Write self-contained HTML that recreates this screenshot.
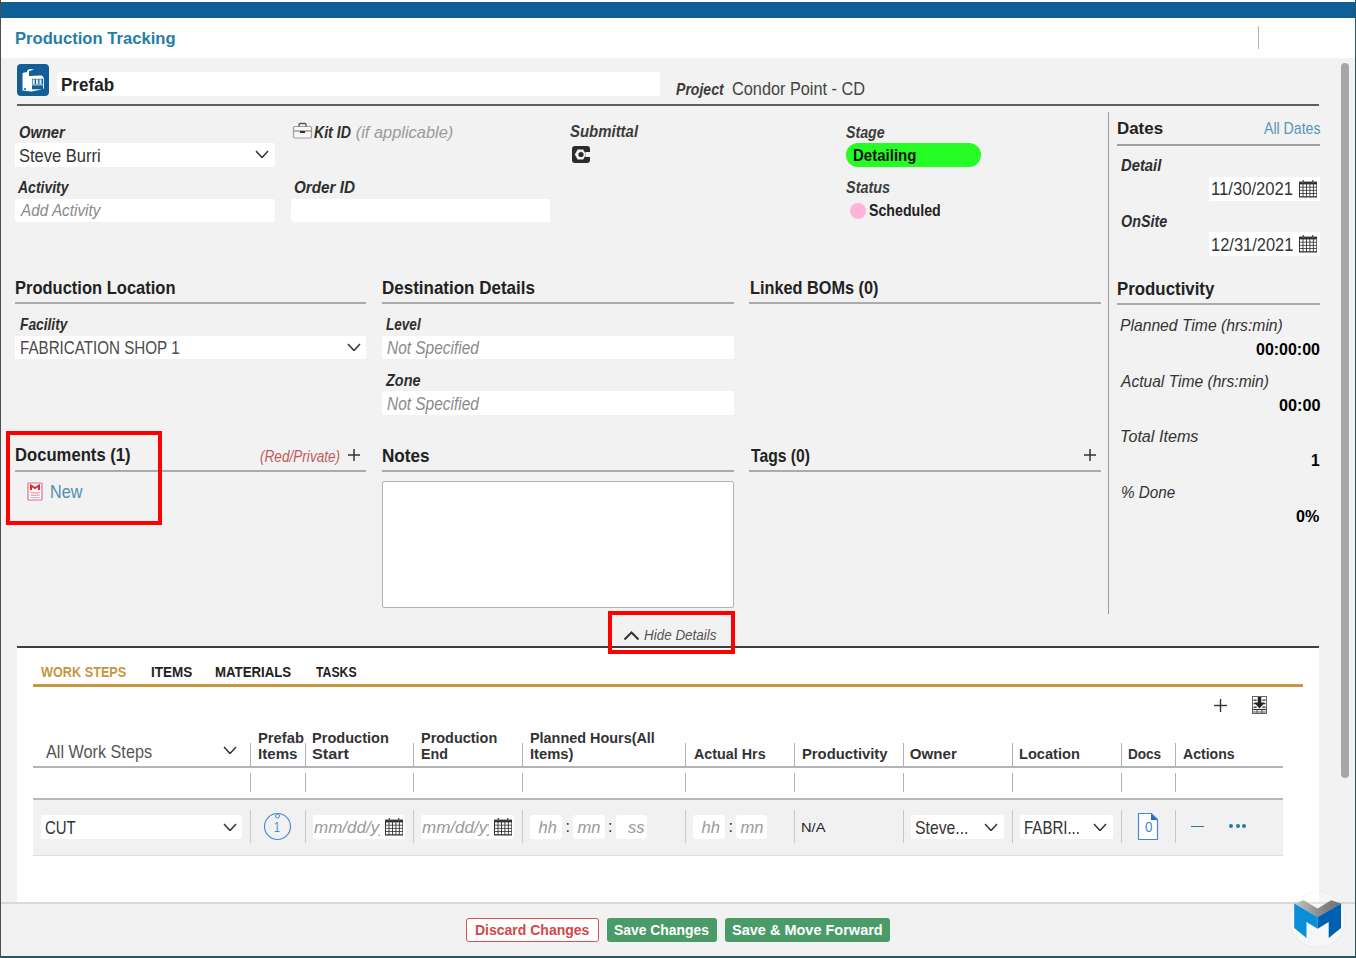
<!DOCTYPE html><html><head><meta charset="utf-8"><style>
*{margin:0;padding:0;box-sizing:border-box}html,body{width:1356px;height:958px;overflow:hidden}
body{position:relative;background:#f2f2f2;font-family:"Liberation Sans",sans-serif}
.a{position:absolute}.t{position:absolute;white-space:nowrap;line-height:1;transform-origin:0 0}
</style></head><body>
<div class="a" style="left:0px;top:0px;width:1356px;height:2px;background:#fff"></div>
<div class="a" style="left:0px;top:2px;width:1356px;height:16px;background:#0f5e96"></div>
<div class="a" style="left:0px;top:18px;width:1356px;height:40px;background:#fff"></div>
<div class="a" style="left:1258px;top:26px;width:1px;height:23px;background:#b4b4b4"></div>
<div class="a" style="left:1341px;top:63px;width:8px;height:715px;background:#a6a6a6;border-radius:4px"></div>
<div class="a" style="left:17px;top:64px;width:32px;height:32px;background:#135e96;border-radius:4px"></div>
<svg class="a" style="left:17px;top:64px" width="32" height="32" viewBox="0 0 32 32"><path d="M5.5 26.5 L5.5 10 Q5.5 8.8 7 8.6 L10 8.2 L10.5 6 Q13 4.2 17 5.6 L12 7.2 L12 12 L24.5 11.6 Q26.5 12.2 26.8 14.5 L27 24.5 Q21 26.3 14.5 27.5 Q9 27.2 5.5 26.5 Z" fill="#fff"/><rect x="15" y="14.8" width="11" height="10.5" fill="#135e96"/><rect x="15.6" y="15.4" width="2.2" height="4.6" fill="#d6ecfa"/><rect x="19" y="15.4" width="2.2" height="4.6" fill="#d6ecfa"/><rect x="22.4" y="15.4" width="2.2" height="4.6" fill="#d6ecfa"/><rect x="15" y="20.2" width="11" height="1.3" fill="#9cc6e6"/><circle cx="8" cy="25" r="1" fill="#135e96"/></svg>
<div class="a" style="left:57px;top:72px;width:603px;height:24px;background:#fff;border-radius:2px"></div>
<div class="a" style="left:17px;top:104px;width:1302px;height:2px;background:#5f5f5f"></div>
<div class="a" style="left:15px;top:143px;width:260px;height:24px;background:#fff;border-radius:2px"></div>
<svg class="a" style="left:255px;top:149.8px" width="14" height="8.6" viewBox="0 0 14 8.6"><polyline points="1,1 7.0,7.6 13,1" fill="none" stroke="#333" stroke-width="1.5"/></svg>
<div class="a" style="left:15px;top:199px;width:260px;height:23px;background:#fff;border-radius:2px"></div>
<svg class="a" style="left:292px;top:122px" width="21" height="17" viewBox="0 0 21 17"><rect x="1.5" y="4.5" width="18" height="11.5" rx="1.5" fill="#f7f7f7" stroke="#a0a0a0" stroke-width="1.2"/><path d="M7 4.5 V2.5 Q7 1.5 8 1.5 H13 Q14 1.5 14 2.5 V4.5" fill="none" stroke="#555" stroke-width="1.3"/><line x1="1.5" y1="9" x2="19.5" y2="9" stroke="#888" stroke-width="1.2"/><rect x="8" y="9" width="5" height="2" fill="#333"/></svg>
<div class="a" style="left:291px;top:199px;width:259px;height:23px;background:#fff;border-radius:2px"></div>
<svg class="a" style="left:572px;top:146px" width="18" height="17" viewBox="0 0 18 17"><path fill="#2b2b2b" fill-rule="evenodd" d="M3 0 H15 Q18 0 18 3 V6 H13.5 V11 H18 V14 Q18 17 15 17 H3 Q0 17 0 14 V3 Q0 0 3 0 Z M2.8 8.5 L5.6 3.6 H11.2 L14 8.5 L11.2 13.4 H5.6 Z"/><circle cx="9" cy="8.5" r="2.6" fill="#2b2b2b"/></svg>
<div class="a" style="left:846px;top:143px;width:135px;height:24px;background:#24fc24;border-radius:12px"></div>
<div class="a" style="left:850px;top:202.5px;width:16px;height:16px;background:#ffb2da;border-radius:50%"></div>
<div class="a" style="left:1108px;top:112px;width:1px;height:502px;background:#9a9a9a"></div>
<div class="a" style="left:1117px;top:144px;width:203px;height:1.5px;background:#a0a0a0"></div>
<div class="a" style="left:1209px;top:177px;width:111px;height:24px;background:#fff"></div>
<svg class="a" style="left:1299px;top:179.5px" width="18" height="18" viewBox="0 0 18 18"><rect x="0" y="1.6" width="18" height="15.9" fill="#333"/><rect x="1.00" y="4.40" width="2.55" height="2.35" fill="#fff"/><rect x="1.00" y="7.55" width="2.55" height="2.35" fill="#fff"/><rect x="1.00" y="10.70" width="2.55" height="2.35" fill="#fff"/><rect x="1.00" y="13.85" width="2.55" height="2.35" fill="#fff"/><rect x="4.45" y="4.40" width="2.55" height="2.35" fill="#fff"/><rect x="4.45" y="7.55" width="2.55" height="2.35" fill="#fff"/><rect x="4.45" y="10.70" width="2.55" height="2.35" fill="#fff"/><rect x="4.45" y="13.85" width="2.55" height="2.35" fill="#fff"/><rect x="7.90" y="4.40" width="2.55" height="2.35" fill="#fff"/><rect x="7.90" y="7.55" width="2.55" height="2.35" fill="#fff"/><rect x="7.90" y="10.70" width="2.55" height="2.35" fill="#fff"/><rect x="7.90" y="13.85" width="2.55" height="2.35" fill="#fff"/><rect x="11.35" y="4.40" width="2.55" height="2.35" fill="#fff"/><rect x="11.35" y="7.55" width="2.55" height="2.35" fill="#fff"/><rect x="11.35" y="10.70" width="2.55" height="2.35" fill="#fff"/><rect x="11.35" y="13.85" width="2.55" height="2.35" fill="#fff"/><rect x="14.80" y="4.40" width="2.55" height="2.35" fill="#fff"/><rect x="14.80" y="7.55" width="2.55" height="2.35" fill="#fff"/><rect x="14.80" y="10.70" width="2.55" height="2.35" fill="#fff"/><rect x="14.80" y="13.85" width="2.55" height="2.35" fill="#fff"/><rect x="3.6" y="0" width="1.4" height="3" fill="#555"/><rect x="13" y="0" width="1.4" height="3" fill="#555"/></svg>
<div class="a" style="left:1209px;top:232px;width:111px;height:24px;background:#fff"></div>
<svg class="a" style="left:1299px;top:234.5px" width="18" height="18" viewBox="0 0 18 18"><rect x="0" y="1.6" width="18" height="15.9" fill="#333"/><rect x="1.00" y="4.40" width="2.55" height="2.35" fill="#fff"/><rect x="1.00" y="7.55" width="2.55" height="2.35" fill="#fff"/><rect x="1.00" y="10.70" width="2.55" height="2.35" fill="#fff"/><rect x="1.00" y="13.85" width="2.55" height="2.35" fill="#fff"/><rect x="4.45" y="4.40" width="2.55" height="2.35" fill="#fff"/><rect x="4.45" y="7.55" width="2.55" height="2.35" fill="#fff"/><rect x="4.45" y="10.70" width="2.55" height="2.35" fill="#fff"/><rect x="4.45" y="13.85" width="2.55" height="2.35" fill="#fff"/><rect x="7.90" y="4.40" width="2.55" height="2.35" fill="#fff"/><rect x="7.90" y="7.55" width="2.55" height="2.35" fill="#fff"/><rect x="7.90" y="10.70" width="2.55" height="2.35" fill="#fff"/><rect x="7.90" y="13.85" width="2.55" height="2.35" fill="#fff"/><rect x="11.35" y="4.40" width="2.55" height="2.35" fill="#fff"/><rect x="11.35" y="7.55" width="2.55" height="2.35" fill="#fff"/><rect x="11.35" y="10.70" width="2.55" height="2.35" fill="#fff"/><rect x="11.35" y="13.85" width="2.55" height="2.35" fill="#fff"/><rect x="14.80" y="4.40" width="2.55" height="2.35" fill="#fff"/><rect x="14.80" y="7.55" width="2.55" height="2.35" fill="#fff"/><rect x="14.80" y="10.70" width="2.55" height="2.35" fill="#fff"/><rect x="14.80" y="13.85" width="2.55" height="2.35" fill="#fff"/><rect x="3.6" y="0" width="1.4" height="3" fill="#555"/><rect x="13" y="0" width="1.4" height="3" fill="#555"/></svg>
<div class="a" style="left:15px;top:302px;width:351px;height:2px;background:#ababab"></div>
<div class="a" style="left:382px;top:302px;width:352px;height:2px;background:#ababab"></div>
<div class="a" style="left:749px;top:302px;width:352px;height:2px;background:#ababab"></div>
<div class="a" style="left:1117px;top:303px;width:203px;height:2px;background:#ababab"></div>
<div class="a" style="left:15px;top:470px;width:351px;height:2px;background:#ababab"></div>
<div class="a" style="left:382px;top:470px;width:352px;height:2px;background:#ababab"></div>
<div class="a" style="left:749px;top:470px;width:352px;height:2px;background:#ababab"></div>
<div class="a" style="left:15px;top:336px;width:351px;height:23px;background:#fff;border-radius:2px"></div>
<svg class="a" style="left:347px;top:342.8px" width="14" height="8.6" viewBox="0 0 14 8.6"><polyline points="1,1 7.0,7.6 13,1" fill="none" stroke="#333" stroke-width="1.5"/></svg>
<div class="a" style="left:382px;top:336px;width:352px;height:23px;background:#fff;border-radius:2px"></div>
<div class="a" style="left:382px;top:391px;width:352px;height:24px;background:#fff;border-radius:2px"></div>
<svg class="a" style="left:348px;top:449px" width="12" height="12" viewBox="0 0 12 12"><line x1="0" y1="6.0" x2="12" y2="6.0" stroke="#333" stroke-width="1.5"/><line x1="6.0" y1="0" x2="6.0" y2="12" stroke="#333" stroke-width="1.5"/></svg>
<svg class="a" style="left:1083.5px;top:448.5px" width="12" height="12" viewBox="0 0 12 12"><line x1="0" y1="6.0" x2="12" y2="6.0" stroke="#333" stroke-width="1.5"/><line x1="6.0" y1="0" x2="6.0" y2="12" stroke="#333" stroke-width="1.5"/></svg>
<svg class="a" style="left:27px;top:482px" width="16" height="19" viewBox="0 0 16 19"><rect x="1" y="1" width="14" height="17" rx="1" fill="#fff" stroke="#e06b8b" stroke-width="1.2"/><path d="M4 8 V3.5 L8 6 L12 3.5 V8" fill="none" stroke="#dd2a2a" stroke-width="2"/><rect x="3.5" y="10" width="9" height="1.5" fill="#eab0b0"/><rect x="3.5" y="12.5" width="9" height="1.5" fill="#eab0b0"/><rect x="3.5" y="15" width="9" height="1.2" fill="#eab0b0"/></svg>
<div class="a" style="left:382px;top:480.5px;width:351.5px;height:127px;background:#fff;border:1px solid #b2b2b2;border-radius:2px"></div>
<div class="a" style="left:17px;top:646px;width:1302px;height:1.5px;background:#3e3e3e"></div>
<svg class="a" style="left:623px;top:630px" width="17" height="11" viewBox="0 0 17 11"><polyline points="1.5,9.5 8.5,2.5 15.5,9.5" fill="none" stroke="#333" stroke-width="2"/></svg>
<div class="a" style="left:17px;top:647.5px;width:1302px;height:254.5px;background:#fff"></div>
<div class="a" style="left:33px;top:684px;width:1270px;height:3px;background:#c8963e"></div>
<svg class="a" style="left:1214px;top:699px" width="13" height="13" viewBox="0 0 13 13"><line x1="0" y1="6.5" x2="13" y2="6.5" stroke="#333" stroke-width="1.4"/><line x1="6.5" y1="0" x2="6.5" y2="13" stroke="#333" stroke-width="1.4"/></svg>
<svg class="a" style="left:1252px;top:696px" width="15" height="18" viewBox="0 0 15 18"><rect x="0.5" y="0.5" width="14" height="17" fill="#fff" stroke="#666" stroke-width="1"/><rect x="1.5" y="3.5" width="3.2" height="1.3" fill="#333"/><rect x="10.3" y="3.5" width="3.2" height="1.3" fill="#333"/><rect x="1.5" y="7" width="3.2" height="1.3" fill="#333"/><rect x="10.3" y="7" width="3.2" height="1.3" fill="#333"/><rect x="1.5" y="10.5" width="3.2" height="1.3" fill="#333"/><rect x="10.3" y="10.5" width="3.2" height="1.3" fill="#333"/><line x1="0.5" y1="13.5" x2="14.5" y2="13.5" stroke="#333" stroke-width="1.2"/><line x1="0.5" y1="16" x2="14.5" y2="16" stroke="#555" stroke-width="1"/><line x1="5" y1="13.5" x2="5" y2="17.5" stroke="#555" stroke-width="1"/><line x1="10" y1="13.5" x2="10" y2="17.5" stroke="#555" stroke-width="1"/><rect x="5.7" y="1" width="3.6" height="6.5" fill="#222"/><path d="M2.3 6.5 H12.7 L7.5 12.5 Z" fill="#222"/></svg>
<svg class="a" style="left:223px;top:745.8px" width="14" height="8.6" viewBox="0 0 14 8.6"><polyline points="1,1 7.0,7.6 13,1" fill="none" stroke="#333" stroke-width="1.5"/></svg>
<div class="a" style="left:250px;top:743px;width:1px;height:23px;background:#b0b0b0"></div>
<div class="a" style="left:250px;top:773px;width:1px;height:19px;background:#b0b0b0"></div>
<div class="a" style="left:250px;top:810px;width:1px;height:33px;background:#c8c8c8"></div>
<div class="a" style="left:305px;top:743px;width:1px;height:23px;background:#b0b0b0"></div>
<div class="a" style="left:305px;top:773px;width:1px;height:19px;background:#b0b0b0"></div>
<div class="a" style="left:305px;top:810px;width:1px;height:33px;background:#c8c8c8"></div>
<div class="a" style="left:413px;top:743px;width:1px;height:23px;background:#b0b0b0"></div>
<div class="a" style="left:413px;top:773px;width:1px;height:19px;background:#b0b0b0"></div>
<div class="a" style="left:413px;top:810px;width:1px;height:33px;background:#c8c8c8"></div>
<div class="a" style="left:522px;top:743px;width:1px;height:23px;background:#b0b0b0"></div>
<div class="a" style="left:522px;top:773px;width:1px;height:19px;background:#b0b0b0"></div>
<div class="a" style="left:522px;top:810px;width:1px;height:33px;background:#c8c8c8"></div>
<div class="a" style="left:685px;top:743px;width:1px;height:23px;background:#b0b0b0"></div>
<div class="a" style="left:685px;top:773px;width:1px;height:19px;background:#b0b0b0"></div>
<div class="a" style="left:685px;top:810px;width:1px;height:33px;background:#c8c8c8"></div>
<div class="a" style="left:794px;top:743px;width:1px;height:23px;background:#b0b0b0"></div>
<div class="a" style="left:794px;top:773px;width:1px;height:19px;background:#b0b0b0"></div>
<div class="a" style="left:794px;top:810px;width:1px;height:33px;background:#c8c8c8"></div>
<div class="a" style="left:903px;top:743px;width:1px;height:23px;background:#b0b0b0"></div>
<div class="a" style="left:903px;top:773px;width:1px;height:19px;background:#b0b0b0"></div>
<div class="a" style="left:903px;top:810px;width:1px;height:33px;background:#c8c8c8"></div>
<div class="a" style="left:1012px;top:743px;width:1px;height:23px;background:#b0b0b0"></div>
<div class="a" style="left:1012px;top:773px;width:1px;height:19px;background:#b0b0b0"></div>
<div class="a" style="left:1012px;top:810px;width:1px;height:33px;background:#c8c8c8"></div>
<div class="a" style="left:1121px;top:743px;width:1px;height:23px;background:#b0b0b0"></div>
<div class="a" style="left:1121px;top:773px;width:1px;height:19px;background:#b0b0b0"></div>
<div class="a" style="left:1121px;top:810px;width:1px;height:33px;background:#c8c8c8"></div>
<div class="a" style="left:1175px;top:743px;width:1px;height:23px;background:#b0b0b0"></div>
<div class="a" style="left:1175px;top:773px;width:1px;height:19px;background:#b0b0b0"></div>
<div class="a" style="left:1175px;top:810px;width:1px;height:33px;background:#c8c8c8"></div>
<div class="a" style="left:33px;top:766px;width:1250px;height:1.5px;background:#b4b4b4"></div>
<div class="a" style="left:33px;top:798px;width:1250px;height:1.5px;background:#b8b8b8"></div>
<div class="a" style="left:33px;top:799.5px;width:1250px;height:55.5px;background:#f1f1f1"></div>
<div class="a" style="left:33px;top:855px;width:1250px;height:1px;background:#dedede"></div>
<div class="a" style="left:250px;top:810px;width:1px;height:33px;background:#c8c8c8"></div>
<div class="a" style="left:305px;top:810px;width:1px;height:33px;background:#c8c8c8"></div>
<div class="a" style="left:413px;top:810px;width:1px;height:33px;background:#c8c8c8"></div>
<div class="a" style="left:522px;top:810px;width:1px;height:33px;background:#c8c8c8"></div>
<div class="a" style="left:685px;top:810px;width:1px;height:33px;background:#c8c8c8"></div>
<div class="a" style="left:794px;top:810px;width:1px;height:33px;background:#c8c8c8"></div>
<div class="a" style="left:903px;top:810px;width:1px;height:33px;background:#c8c8c8"></div>
<div class="a" style="left:1012px;top:810px;width:1px;height:33px;background:#c8c8c8"></div>
<div class="a" style="left:1121px;top:810px;width:1px;height:33px;background:#c8c8c8"></div>
<div class="a" style="left:1175px;top:810px;width:1px;height:33px;background:#c8c8c8"></div>
<div class="a" style="left:41px;top:815px;width:201px;height:24px;background:#fff;border-radius:2px"></div>
<svg class="a" style="left:223px;top:822.6px" width="14" height="8.6" viewBox="0 0 14 8.6"><polyline points="1,1 7.0,7.6 13,1" fill="none" stroke="#333" stroke-width="1.5"/></svg>
<svg class="a" style="left:263px;top:812px" width="29" height="29" viewBox="0 0 29 29"><circle cx="14.5" cy="14.5" r="13" fill="none" stroke="#4a86d0" stroke-width="1.1"/><circle cx="14.5" cy="4" r="2" fill="#f1f1f1" stroke="#4a86d0" stroke-width="1"/></svg>
<div class="a" style="left:313px;top:815px;width:92px;height:24px;background:#fff;border-radius:2px"></div>
<div class="a" style="left:421px;top:815px;width:93px;height:24px;background:#fff;border-radius:2px"></div>
<svg class="a" style="left:385px;top:817.5px" width="18" height="18" viewBox="0 0 18 18"><rect x="0" y="1.6" width="18" height="15.9" fill="#333"/><rect x="1.00" y="4.40" width="2.55" height="2.35" fill="#fff"/><rect x="1.00" y="7.55" width="2.55" height="2.35" fill="#fff"/><rect x="1.00" y="10.70" width="2.55" height="2.35" fill="#fff"/><rect x="1.00" y="13.85" width="2.55" height="2.35" fill="#fff"/><rect x="4.45" y="4.40" width="2.55" height="2.35" fill="#fff"/><rect x="4.45" y="7.55" width="2.55" height="2.35" fill="#fff"/><rect x="4.45" y="10.70" width="2.55" height="2.35" fill="#fff"/><rect x="4.45" y="13.85" width="2.55" height="2.35" fill="#fff"/><rect x="7.90" y="4.40" width="2.55" height="2.35" fill="#fff"/><rect x="7.90" y="7.55" width="2.55" height="2.35" fill="#fff"/><rect x="7.90" y="10.70" width="2.55" height="2.35" fill="#fff"/><rect x="7.90" y="13.85" width="2.55" height="2.35" fill="#fff"/><rect x="11.35" y="4.40" width="2.55" height="2.35" fill="#fff"/><rect x="11.35" y="7.55" width="2.55" height="2.35" fill="#fff"/><rect x="11.35" y="10.70" width="2.55" height="2.35" fill="#fff"/><rect x="11.35" y="13.85" width="2.55" height="2.35" fill="#fff"/><rect x="14.80" y="4.40" width="2.55" height="2.35" fill="#fff"/><rect x="14.80" y="7.55" width="2.55" height="2.35" fill="#fff"/><rect x="14.80" y="10.70" width="2.55" height="2.35" fill="#fff"/><rect x="14.80" y="13.85" width="2.55" height="2.35" fill="#fff"/><rect x="3.6" y="0" width="1.4" height="3" fill="#555"/><rect x="13" y="0" width="1.4" height="3" fill="#555"/></svg>
<svg class="a" style="left:493.5px;top:817.5px" width="18" height="18" viewBox="0 0 18 18"><rect x="0" y="1.6" width="18" height="15.9" fill="#333"/><rect x="1.00" y="4.40" width="2.55" height="2.35" fill="#fff"/><rect x="1.00" y="7.55" width="2.55" height="2.35" fill="#fff"/><rect x="1.00" y="10.70" width="2.55" height="2.35" fill="#fff"/><rect x="1.00" y="13.85" width="2.55" height="2.35" fill="#fff"/><rect x="4.45" y="4.40" width="2.55" height="2.35" fill="#fff"/><rect x="4.45" y="7.55" width="2.55" height="2.35" fill="#fff"/><rect x="4.45" y="10.70" width="2.55" height="2.35" fill="#fff"/><rect x="4.45" y="13.85" width="2.55" height="2.35" fill="#fff"/><rect x="7.90" y="4.40" width="2.55" height="2.35" fill="#fff"/><rect x="7.90" y="7.55" width="2.55" height="2.35" fill="#fff"/><rect x="7.90" y="10.70" width="2.55" height="2.35" fill="#fff"/><rect x="7.90" y="13.85" width="2.55" height="2.35" fill="#fff"/><rect x="11.35" y="4.40" width="2.55" height="2.35" fill="#fff"/><rect x="11.35" y="7.55" width="2.55" height="2.35" fill="#fff"/><rect x="11.35" y="10.70" width="2.55" height="2.35" fill="#fff"/><rect x="11.35" y="13.85" width="2.55" height="2.35" fill="#fff"/><rect x="14.80" y="4.40" width="2.55" height="2.35" fill="#fff"/><rect x="14.80" y="7.55" width="2.55" height="2.35" fill="#fff"/><rect x="14.80" y="10.70" width="2.55" height="2.35" fill="#fff"/><rect x="14.80" y="13.85" width="2.55" height="2.35" fill="#fff"/><rect x="3.6" y="0" width="1.4" height="3" fill="#555"/><rect x="13" y="0" width="1.4" height="3" fill="#555"/></svg>
<div class="a" style="left:530px;top:815px;width:32px;height:23.5px;background:#fff;border-radius:3px"></div>
<div class="a" style="left:573px;top:815px;width:32px;height:23.5px;background:#fff;border-radius:3px"></div>
<div class="a" style="left:615.5px;top:815px;width:31.5px;height:23.5px;background:#fff;border-radius:3px"></div>
<div class="a" style="left:693px;top:815px;width:31.5px;height:23.5px;background:#fff;border-radius:3px"></div>
<div class="a" style="left:736px;top:815px;width:31px;height:23.5px;background:#fff;border-radius:3px"></div>
<div class="a" style="left:911px;top:815px;width:93px;height:24px;background:#fff;border-radius:2px"></div>
<svg class="a" style="left:984px;top:822.6px" width="14" height="8.6" viewBox="0 0 14 8.6"><polyline points="1,1 7.0,7.6 13,1" fill="none" stroke="#333" stroke-width="1.5"/></svg>
<div class="a" style="left:1019.5px;top:815px;width:93px;height:24px;background:#fff;border-radius:2px"></div>
<svg class="a" style="left:1093px;top:822.6px" width="14" height="8.6" viewBox="0 0 14 8.6"><polyline points="1,1 7.0,7.6 13,1" fill="none" stroke="#333" stroke-width="1.5"/></svg>
<svg class="a" style="left:1137px;top:812px" width="22" height="29" viewBox="0 0 22 29"><path d="M1.5 1.5 H14.5 L20.5 7.5 V27.5 H1.5 Z" fill="#fff" stroke="#4a86d0" stroke-width="1.2"/><path d="M14 1.5 L20.5 8 H14 Z" fill="#1f6fc8"/></svg>
<div class="a" style="left:1191px;top:825.5px;width:13px;height:1.6px;background:#2a7a9a"></div>
<div class="a" style="left:1229px;top:824px;width:4px;height:4px;background:#2a7a9a;border-radius:50%"></div>
<div class="a" style="left:1235.5px;top:824px;width:4px;height:4px;background:#2a7a9a;border-radius:50%"></div>
<div class="a" style="left:1242px;top:824px;width:4px;height:4px;background:#2a7a9a;border-radius:50%"></div>
<div class="a" style="left:1px;top:902px;width:1354px;height:1.5px;background:#d9d9d9"></div>
<div class="a" style="left:466px;top:918px;width:133px;height:24px;background:#fff;border:1px solid #d9534f;border-radius:3px"></div>
<div class="a" style="left:606.5px;top:918px;width:110.5px;height:24px;background:#4a9b67;border-radius:3px"></div>
<div class="a" style="left:725px;top:918px;width:164.5px;height:24px;background:#4a9b67;border-radius:3px"></div>
<div class="a" style="left:1290px;top:891.5px;width:55px;height:55px;border-radius:50%;background:rgba(255,255,255,0.3);box-shadow:0 0 2px rgba(0,0,0,0.10)"></div>
<svg class="a" style="left:1290px;top:895px" width="55" height="48" viewBox="0 0 55 48"><defs><linearGradient id="g" x1="0" y1="0" x2="1" y2="0"><stop offset="0" stop-color="#c8c8c8"/><stop offset="0.5" stop-color="#8e8e8e"/><stop offset="1" stop-color="#6e6e6e"/></linearGradient></defs><path d="M4.2 8.4 L13.4 5.3 L27.6 13.4 L41.2 5.3 L51 8.4 L27.6 22 Z" fill="url(#g)"/><path d="M4.2 8.4 L27.6 22 L27.6 33.7 L16.5 26.9 L16.5 42.9 L4.2 33 Z" fill="#0a8fd6"/><path d="M27.6 22 L51 8.4 L51 33 L38.7 42.9 L38.7 26.9 L27.6 33.7 Z" fill="#0060b0"/></svg>
<div class="a" style="left:0px;top:0px;width:1px;height:958px;background:#4d4d4d"></div>
<div class="a" style="left:1355px;top:0px;width:1px;height:958px;background:#1f5c5e"></div>
<div class="a" style="left:0px;top:956px;width:1356px;height:2px;background:#1f5c5e"></div>
<div class="t" style="left:15.33px;top:29.80px;font-size:17.15px;font-weight:700;color:#267ea3;transform:scaleX(0.9689);">Production Tracking</div>
<div class="t" style="left:61.23px;top:77.20px;font-size:17.59px;font-weight:700;color:#222;transform:scaleX(0.9698);">Prefab</div>
<div class="t" style="left:676.20px;top:81.70px;font-size:16.86px;font-weight:700;color:#3c3c3c;font-style:italic;transform:scaleX(0.8345);">Project</div>
<div class="t" style="left:732.07px;top:81.40px;font-size:17.44px;font-weight:400;color:#444;transform:scaleX(0.9340);">Condor Point - CD</div>
<div class="t" style="left:18.62px;top:124.50px;font-size:16.72px;font-weight:700;color:#2e2e2e;font-style:italic;transform:scaleX(0.8808);">Owner</div>
<div class="t" style="left:19.46px;top:147.80px;font-size:17.59px;font-weight:400;color:#333;transform:scaleX(0.9400);">Steve Burri</div>
<div class="t" style="left:17.60px;top:179.90px;font-size:16.57px;font-weight:700;color:#2e2e2e;font-style:italic;transform:scaleX(0.8450);">Activity</div>
<div class="t" style="left:20.63px;top:202.40px;font-size:16.42px;font-weight:400;color:#8a8a8a;font-style:italic;transform:scaleX(0.9322);">Add Activity</div>
<div class="t" style="left:314.30px;top:124.00px;font-size:16.42px;font-weight:700;color:#2e2e2e;font-style:italic;transform:scaleX(0.8605);">Kit ID</div>
<div class="t" style="left:355.70px;top:124.00px;font-size:16.42px;font-weight:400;color:#9a9a9a;font-style:italic;">(if applicable)</div>
<div class="t" style="left:294.08px;top:180.30px;font-size:16.57px;font-weight:700;color:#2e2e2e;font-style:italic;transform:scaleX(0.9185);">Order ID</div>
<div class="t" style="left:569.70px;top:124.40px;font-size:16.86px;font-weight:700;color:#3c3c3c;font-style:italic;transform:scaleX(0.8857);">Submittal</div>
<div class="t" style="left:845.50px;top:124.50px;font-size:16.72px;font-weight:700;color:#3c3c3c;font-style:italic;transform:scaleX(0.8511);">Stage</div>
<div class="t" style="left:853.39px;top:147.80px;font-size:16.57px;font-weight:700;color:#111;transform:scaleX(0.9074);">Detailing</div>
<div class="t" style="left:845.50px;top:179.90px;font-size:16.72px;font-weight:700;color:#3c3c3c;font-style:italic;transform:scaleX(0.8640);">Status</div>
<div class="t" style="left:869.07px;top:202.20px;font-size:17.15px;font-weight:700;color:#222;transform:scaleX(0.8282);">Scheduled</div>
<div class="t" style="left:1116.81px;top:120.30px;font-size:17.15px;font-weight:700;color:#222;transform:scaleX(0.9867);">Dates</div>
<div class="t" style="left:1264.10px;top:120.30px;font-size:17.15px;font-weight:400;color:#5796b6;transform:scaleX(0.8235);">All Dates</div>
<div class="t" style="left:1121.40px;top:156.90px;font-size:17.30px;font-weight:700;color:#2e2e2e;font-style:italic;transform:scaleX(0.8553);">Detail</div>
<div class="t" style="left:1211.26px;top:181.40px;font-size:17.73px;font-weight:400;color:#333;transform:scaleX(0.9395);">11/30/2021</div>
<div class="t" style="left:1120.53px;top:212.90px;font-size:16.42px;font-weight:700;color:#2e2e2e;font-style:italic;transform:scaleX(0.8731);">OnSite</div>
<div class="t" style="left:1211.27px;top:236.60px;font-size:17.73px;font-weight:400;color:#333;transform:scaleX(0.9287);">12/31/2021</div>
<div class="t" style="left:14.58px;top:279.80px;font-size:17.88px;font-weight:700;color:#222;transform:scaleX(0.9244);">Production Location</div>
<div class="t" style="left:19.50px;top:316.90px;font-size:16.72px;font-weight:700;color:#2e2e2e;font-style:italic;transform:scaleX(0.8241);">Facility</div>
<div class="t" style="left:19.55px;top:340.20px;font-size:17.88px;font-weight:400;color:#4a4a4a;transform:scaleX(0.8495);">FABRICATION SHOP 1</div>
<div class="t" style="left:381.95px;top:279.80px;font-size:17.88px;font-weight:700;color:#222;transform:scaleX(0.9509);">Destination Details</div>
<div class="t" style="left:386.20px;top:316.90px;font-size:16.72px;font-weight:700;color:#2e2e2e;font-style:italic;transform:scaleX(0.8116);">Level</div>
<div class="t" style="left:386.63px;top:340.20px;font-size:17.73px;font-weight:400;color:#8a8a8a;font-style:italic;transform:scaleX(0.8714);">Not Specified</div>
<div class="t" style="left:386.20px;top:372.80px;font-size:16.72px;font-weight:700;color:#2e2e2e;font-style:italic;transform:scaleX(0.8650);">Zone</div>
<div class="t" style="left:386.63px;top:395.50px;font-size:17.73px;font-weight:400;color:#8a8a8a;font-style:italic;transform:scaleX(0.8714);">Not Specified</div>
<div class="t" style="left:749.59px;top:279.80px;font-size:17.88px;font-weight:700;color:#222;transform:scaleX(0.9122);">Linked BOMs (0)</div>
<div class="t" style="left:1116.85px;top:281.10px;font-size:17.73px;font-weight:700;color:#222;transform:scaleX(0.9505);">Productivity</div>
<div class="t" style="left:1120.48px;top:317.10px;font-size:17.01px;font-weight:400;color:#333;font-style:italic;transform:scaleX(0.9223);">Planned Time (hrs:min)</div>
<div class="t" style="left:1256.33px;top:341.00px;font-size:16.42px;font-weight:700;color:#000;transform:scaleX(0.9734);">00:00:00</div>
<div class="t" style="left:1121.42px;top:372.60px;font-size:17.01px;font-weight:400;color:#333;font-style:italic;transform:scaleX(0.9167);">Actual Time (hrs:min)</div>
<div class="t" style="left:1279.01px;top:396.60px;font-size:16.42px;font-weight:700;color:#000;transform:scaleX(0.9900);">00:00</div>
<div class="t" style="left:1119.78px;top:429.00px;font-size:16.86px;font-weight:400;color:#333;font-style:italic;transform:scaleX(0.9587);">Total Items</div>
<div class="t" style="left:1311.09px;top:452.00px;font-size:17.01px;font-weight:700;color:#000;transform:scaleX(0.9125);">1</div>
<div class="t" style="left:1120.77px;top:484.20px;font-size:16.42px;font-weight:400;color:#333;font-style:italic;transform:scaleX(0.9281);">% Done</div>
<div class="t" style="left:1296.39px;top:509.00px;font-size:15.99px;font-weight:700;color:#000;transform:scaleX(1.0091);">0%</div>
<div class="t" style="left:14.57px;top:447.20px;font-size:17.88px;font-weight:700;color:#222;transform:scaleX(0.9320);">Documents (1)</div>
<div class="t" style="left:260.15px;top:448.50px;font-size:15.99px;font-weight:400;color:#c25a5a;font-style:italic;transform:scaleX(0.8511);">(Red/Private)</div>
<div class="t" style="left:50.01px;top:483.30px;font-size:18.17px;font-weight:400;color:#4f8fb2;transform:scaleX(0.8889);">New</div>
<div class="t" style="left:382.04px;top:447.70px;font-size:17.88px;font-weight:700;color:#222;transform:scaleX(0.9583);">Notes</div>
<div class="t" style="left:750.50px;top:447.50px;font-size:17.88px;font-weight:700;color:#222;transform:scaleX(0.8776);">Tags (0)</div>
<div class="t" style="left:644.00px;top:627.90px;font-size:14.68px;font-weight:400;color:#555;font-style:italic;transform:scaleX(0.9165);">Hide Details</div>
<div class="t" style="left:41.30px;top:665.00px;font-size:14.68px;font-weight:700;color:#c8963e;transform:scaleX(0.8643);">WORK STEPS</div>
<div class="t" style="left:150.68px;top:665.00px;font-size:14.68px;font-weight:700;color:#222;transform:scaleX(0.9209);">ITEMS</div>
<div class="t" style="left:215.10px;top:665.00px;font-size:14.68px;font-weight:700;color:#222;transform:scaleX(0.9012);">MATERIALS</div>
<div class="t" style="left:315.90px;top:665.00px;font-size:14.68px;font-weight:700;color:#222;transform:scaleX(0.8354);">TASKS</div>
<div class="t" style="left:45.90px;top:743.60px;font-size:17.88px;font-weight:400;color:#555;transform:scaleX(0.9078);">All Work Steps</div>
<div class="t" style="left:258.02px;top:730.40px;font-size:15.12px;font-weight:700;color:#333;transform:scaleX(0.9761);">Prefab</div>
<div class="t" style="left:258.00px;top:746.30px;font-size:15.12px;font-weight:700;color:#333;">Items</div>
<div class="t" style="left:312.34px;top:730.40px;font-size:15.12px;font-weight:700;color:#333;transform:scaleX(0.9641);">Production</div>
<div class="t" style="left:312.22px;top:746.30px;font-size:15.12px;font-weight:700;color:#333;transform:scaleX(1.0758);">Start</div>
<div class="t" style="left:421.44px;top:730.40px;font-size:15.12px;font-weight:700;color:#333;transform:scaleX(0.9564);">Production</div>
<div class="t" style="left:421.46px;top:746.30px;font-size:15.12px;font-weight:700;color:#333;transform:scaleX(0.9444);">End</div>
<div class="t" style="left:530.05px;top:730.40px;font-size:15.12px;font-weight:700;color:#333;transform:scaleX(0.9535);">Planned Hours(All</div>
<div class="t" style="left:530.02px;top:746.30px;font-size:15.12px;font-weight:700;color:#333;transform:scaleX(0.9767);">Items)</div>
<div class="t" style="left:693.50px;top:746.30px;font-size:15.12px;font-weight:700;color:#333;transform:scaleX(0.9480);">Actual Hrs</div>
<div class="t" style="left:801.82px;top:746.30px;font-size:15.12px;font-weight:700;color:#333;transform:scaleX(0.9791);">Productivity</div>
<div class="t" style="left:909.80px;top:746.30px;font-size:15.12px;font-weight:700;color:#333;">Owner</div>
<div class="t" style="left:1019.03px;top:746.30px;font-size:15.12px;font-weight:700;color:#333;transform:scaleX(0.9672);">Location</div>
<div class="t" style="left:1128.10px;top:746.30px;font-size:15.12px;font-weight:700;color:#333;transform:scaleX(0.8971);">Docs</div>
<div class="t" style="left:1183.00px;top:746.30px;font-size:15.12px;font-weight:700;color:#333;transform:scaleX(0.9309);">Actions</div>
<div class="t" style="left:45.06px;top:820.00px;font-size:17.73px;font-weight:400;color:#333;transform:scaleX(0.8429);">CUT</div>
<div class="t" style="left:801.21px;top:820.50px;font-size:13.52px;font-weight:400;color:#222;transform:scaleX(1.0864);">N/A</div>
<div class="t" style="left:915.31px;top:819.80px;font-size:17.73px;font-weight:400;color:#333;transform:scaleX(0.8897);">Steve...</div>
<div class="t" style="left:1024.15px;top:819.80px;font-size:17.73px;font-weight:400;color:#333;transform:scaleX(0.8484);">FABRI...</div>
<div class="t" style="left:273.69px;top:819.80px;font-size:14.83px;font-weight:400;color:#4a86d0;transform:scaleX(0.7143);">1</div>
<div class="t" style="left:1144.60px;top:819.80px;font-size:14.54px;font-weight:400;color:#4a86d0;transform:scaleX(0.9250);">0</div>
<div class="t" style="left:474.76px;top:923.00px;font-size:14.97px;font-weight:700;color:#d24848;transform:scaleX(0.9355);">Discard Changes</div>
<div class="t" style="left:614.07px;top:923.00px;font-size:14.97px;font-weight:700;color:#ffffff;transform:scaleX(0.9277);">Save Changes</div>
<div class="t" style="left:731.53px;top:923.00px;font-size:14.97px;font-weight:700;color:#ffffff;transform:scaleX(0.9688);">Save &amp; Move Forward</div>
<div class="a" style="left:313px;top:815px;width:67px;height:24px;overflow:hidden">
<div class="t" style="left:1px;top:3.5px;font-size:17px;color:#9a9a9a;font-style:italic">mm/dd/yy</div></div>
<div class="a" style="left:421px;top:815px;width:68px;height:24px;overflow:hidden">
<div class="t" style="left:1px;top:3.5px;font-size:17px;color:#9a9a9a;font-style:italic">mm/dd/yy</div></div>
<div class="t" style="left:538.5px;top:818.5px;font-size:16.5px;color:#9a9a9a;font-weight:400;font-style:italic;">hh</div>
<div class="t" style="left:577.5px;top:818.5px;font-size:16.5px;color:#9a9a9a;font-weight:400;font-style:italic;">mn</div>
<div class="t" style="left:628px;top:818.5px;font-size:16.5px;color:#9a9a9a;font-weight:400;font-style:italic;">ss</div>
<div class="t" style="left:701.5px;top:818.5px;font-size:16.5px;color:#9a9a9a;font-weight:400;font-style:italic;">hh</div>
<div class="t" style="left:740.5px;top:818.5px;font-size:16.5px;color:#9a9a9a;font-weight:400;font-style:italic;">mn</div>
<div class="t" style="left:565.5px;top:818.5px;font-size:16px;color:#333;font-weight:400;">:</div>
<div class="t" style="left:608px;top:818.5px;font-size:16px;color:#333;font-weight:400;">:</div>
<div class="t" style="left:728.5px;top:818.5px;font-size:16px;color:#333;font-weight:400;">:</div>
<div class="a" style="left:6px;top:431px;width:156px;height:94px;border:4px solid #ff0000"></div>
<div class="a" style="left:608px;top:611px;width:127px;height:43px;border:4px solid #ff0000"></div>
</body></html>
